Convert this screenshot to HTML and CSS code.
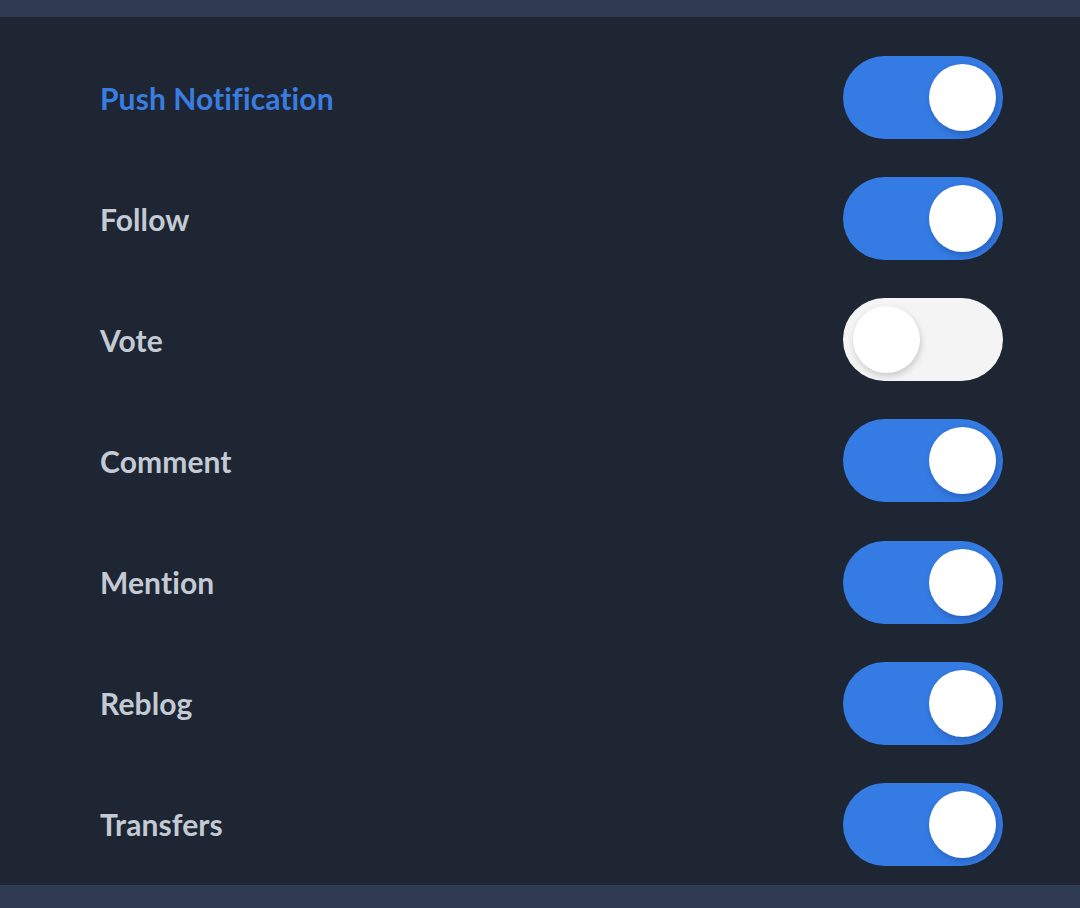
FILE: index.html
```html
<!DOCTYPE html>
<html>
<head>
<meta charset="utf-8">
<link rel="stylesheet" href="styles.css">
</head>
<body>
<div class="topbar"></div>
<main class="list">
  <div class="row">
    <span class="label title">Push Notification</span>
    <div class="toggle on"><div class="knob"></div></div>
  </div>
  <div class="row">
    <span class="label">Follow</span>
    <div class="toggle on"><div class="knob"></div></div>
  </div>
  <div class="row">
    <span class="label">Vote</span>
    <div class="toggle off"><div class="knob"></div></div>
  </div>
  <div class="row">
    <span class="label">Comment</span>
    <div class="toggle on"><div class="knob"></div></div>
  </div>
  <div class="row">
    <span class="label">Mention</span>
    <div class="toggle on"><div class="knob"></div></div>
  </div>
  <div class="row">
    <span class="label">Reblog</span>
    <div class="toggle on"><div class="knob"></div></div>
  </div>
  <div class="row">
    <span class="label">Transfers</span>
    <div class="toggle on"><div class="knob"></div></div>
  </div>
</main>
<div class="bottombar"></div>
</body>
</html>
```
FILE: styles.css
```css
html, body {
  margin: 0;
  padding: 0;
  height: 908px;
  overflow: hidden;
  background: #1e2633;
  font-family: Lato, "Open Sans", sans-serif;
}
body {
  display: flex;
  flex-direction: column;
}
.topbar {
  height: 17px;
  background: #2e3b52;
  flex: none;
}
.bottombar {
  height: 23px;
  background: #2e3b52;
  flex: none;
}
.list {
  flex: 1;
  display: flex;
  flex-direction: column;
  padding: 20px 77px 0 100px;
}
.row {
  height: 121.15px;
  flex: none;
  display: flex;
  align-items: center;
  justify-content: space-between;
}
.label {
  font-size: 30px;
  font-weight: 700;
  color: #c4cad4;
  letter-spacing: 0.1px;
}
.label.title {
  color: #3a7de0;
}
.toggle {
  width: 160px;
  height: 83px;
  border-radius: 42px;
  display: flex;
  align-items: center;
  box-sizing: border-box;
}
.toggle.on {
  background: #347be3;
  justify-content: flex-end;
  padding-right: 7px;
}
.toggle.off {
  background: #f4f4f5;
  justify-content: flex-start;
  padding-left: 10px;
}
.knob {
  width: 67px;
  height: 67px;
  border-radius: 50%;
  background: #ffffff;
}
.toggle.on .knob {
  box-shadow: 2px 3px 6px rgba(20, 50, 120, 0.35);
}
.toggle.off .knob {
  box-shadow: 1px 3px 6px rgba(0, 0, 0, 0.18);
}
```
